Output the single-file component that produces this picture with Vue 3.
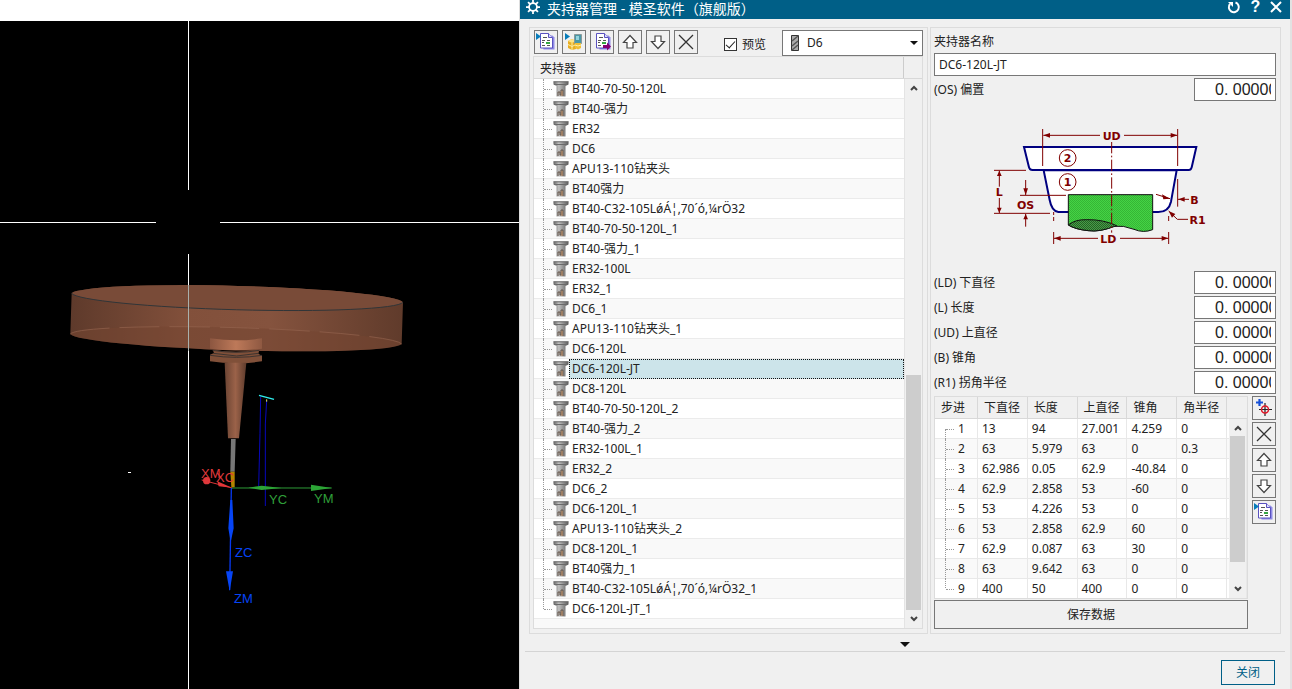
<script setup>
import { ref } from 'vue'

const holders = [
  'BT40-70-50-120L', 'BT40-强力', 'ER32', 'DC6', 'APU13-110钻夹头', 'BT40强力',
  'BT40-C32-105LǿÁ¦‚70´ó‚¼rÖ32', 'BT40-70-50-120L_1', 'BT40-强力_1',
  'ER32-100L', 'ER32_1', 'DC6_1', 'APU13-110钻夹头_1', 'DC6-120L', 'DC6-120L-JT',
  'DC8-120L', 'BT40-70-50-120L_2', 'BT40-强力_2', 'ER32-100L_1', 'ER32_2', 'DC6_2',
  'DC6-120L_1', 'APU13-110钻夹头_2', 'DC8-120L_1', 'BT40强力_1',
  'BT40-C32-105LǿÁ¦‚70´ó‚¼rÖ32_1', 'DC6-120L-JT_1',
]
const selected = ref('DC6-120L-JT')
const holderName = ref('DC6-120L-JT')
const preview = ref(true)
const tool = ref('D6')
const offset = ref('0. 00000')

const fields = ref([
  { id: 'ld', label: '(LD) 下直径', value: '0. 00000' },
  { id: 'len', label: '(L) 长度', value: '0. 00000' },
  { id: 'ud', label: '(UD) 上直径', value: '0. 00000' },
  { id: 'taper', label: '(B) 锥角', value: '0. 00000' },
  { id: 'r1', label: '(R1) 拐角半径', value: '0. 00000' },
])

const columns = ['步进', '下直径', '长度', '上直径', '锥角', '角半径']
const steps = [
  ['1', '13', '94', '27.001', '4.259', '0'],
  ['2', '63', '5.979', '63', '0', '0.3'],
  ['3', '62.986', '0.05', '62.9', '-40.84', '0'],
  ['4', '62.9', '2.858', '53', '-60', '0'],
  ['5', '53', '4.226', '53', '0', '0'],
  ['6', '53', '2.858', '62.9', '60', '0'],
  ['7', '62.9', '0.087', '63', '30', '0'],
  ['8', '63', '9.642', '63', '0', '0'],
  ['9', '400', '50', '400', '0', '0'],
]
const listTools = [
  { icon: 'import', label: '导入' }, { icon: 'library', label: '库' }, { icon: 'export', label: '导出' },
  { icon: 'up', label: '上移' }, { icon: 'down', label: '下移' }, { icon: 'delete', label: '删除' },
]
const stepTools = [
  { icon: 'add', label: '添加' }, { icon: 'delete', label: '删除步进' }, { icon: 'up', label: '步进上移' },
  { icon: 'down', label: '步进下移' }, { icon: 'import', label: '导入步进' },
]
</script>

<template>
  <svg class="defs" aria-hidden="true">
    <defs>
      <linearGradient id="metal">
        <stop offset="0" stop-color="#666" /><stop offset=".35" stop-color="#c0c0c0" /><stop offset="1" stop-color="#5c5c5c" />
      </linearGradient>
      <linearGradient id="disc">
        <stop offset="0" stop-color="#5e3a2b" /><stop offset=".35" stop-color="#82503b" /><stop offset=".6" stop-color="#85533e" /><stop offset="1" stop-color="#603b2b" />
      </linearGradient>
      <linearGradient id="cone">
        <stop offset="0" stop-color="#6b4433" /><stop offset=".5" stop-color="#9b6249" /><stop offset="1" stop-color="#5e3b2c" />
      </linearGradient>
      <linearGradient id="ring">
        <stop offset="0" stop-color="#8c5640" /><stop offset=".5" stop-color="#bd7959" /><stop offset="1" stop-color="#8f5942" />
      </linearGradient>
      <pattern id="greenDots" width="6" height="6" patternUnits="userSpaceOnUse">
        <rect width="6" height="6" fill="#45d345" /><rect width="3" height="3" fill="#35b535" /><rect x="3" y="3" width="3" height="3" fill="#35b535" />
      </pattern>
      <pattern id="darkDots" width="6" height="6" patternUnits="userSpaceOnUse">
        <rect width="6" height="6" fill="#499b49" /><rect width="3" height="3" fill="#246324" /><rect x="3" y="3" width="3" height="3" fill="#246324" />
      </pattern>
      <symbol id="doc" viewBox="0 0 20 20">
        <path d="M6 3.500h10.500l2 2v12h-11z" fill="#8f8ae6" />
        <path d="M4.500 1.500h8l4 4v10.500h-12z" fill="#fff" stroke="#5a52c0" />
        <path d="M12.500 1.500v4h4" fill="#dcdcff" stroke="#5a52c0" />
        <path d="M7 5.500h4M6 8.500h3M11 8.500h3M6 10.500h2M6 13.500h3M11 13.500h3" stroke="#555" />
        <path d="M10 11h4" stroke="#35a843" stroke-width="2" />
      </symbol>
      <symbol id="i-import" viewBox="0 0 20 20"><use href="#doc" /><path d="M0 1l5 3.500L0 8z" fill="#087cba" /></symbol>
      <symbol id="i-export" viewBox="0 0 20 20"><use href="#doc" /><path d="M11 13h4v-2.500l4 4-4 4V16h-4z" fill="#850074" /></symbol>
      <symbol id="i-library" viewBox="0 0 20 20">
        <path d="M1 1l5 3.500L1 8z" fill="#087cba" />
        <path d="M4 9l4-2 4 2v8l-4 1-4-2z" fill="#e8ad22" /><path d="M4 9l4-2 4 2-4 2z" fill="#ffe485" />
        <path d="M4 12.500l4 2 4-2M8 11v7" fill="none" stroke="#fff0a5" />
        <path d="M10.500 2.500h7v9h-7z" fill="#4b98a8" stroke="#8a9a9a" /><path d="M12 4h3v4h-3z" fill="#94d4dd" />
        <path d="M11 11h6v5l-3 1.500-3-1.500z" fill="#f0be36" /><path d="M11 13l3 1 3-1" fill="none" stroke="#fff0a5" />
      </symbol>
      <symbol id="i-up" viewBox="0 0 20 20"><path d="M10 3.500l6.500 7h-3.500v5.500H7v-5.500H3.500z" fill="#fff" stroke="#444" stroke-width="1.200" /></symbol>
      <symbol id="i-down" viewBox="0 0 20 20"><path d="M10 16.500L3.500 9.500H7V4h6v5.500h3.500z" fill="#fff" stroke="#444" stroke-width="1.200" /></symbol>
      <symbol id="i-delete" viewBox="0 0 20 20"><path d="M3 3l14 14M17 3L3 17" stroke="#333" stroke-width="1.300" /></symbol>
      <symbol id="i-add" viewBox="0 0 20 20">
        <path d="M2 4.500h7M5.500 1v7" stroke="#1650d8" stroke-width="2.200" />
        <path d="M11 5v13M5 11.500h13" stroke="#222" stroke-width="1.200" /><circle cx="11" cy="11.500" r="3.500" fill="none" stroke="#e01828" stroke-width="1.500" />
      </symbol>
      <symbol id="holder" viewBox="0 0 16 16">
        <path d="M.5.500h15v3l-3 1.500v10.500h-9V5L.5 3.500z" fill="url(#metal)" />
        <path d="M.5.800h15M1 3.500h14" stroke="#6a6a6a" />
        <path d="M5 15v-4h2v3h1V9h2v6" fill="none" stroke="#66564a" /><path d="M9 10v5" stroke="#b98354" />
      </symbol>
    </defs>
  </svg>

  <main class="screen">
    <section class="viewport">
      <div class="strip"></div>
      <svg class="scene" viewBox="0 21 519 668">
        <g transform="translate(50 270) scale(.33333)">
          <path d="M65 70A498 38 1.550 0 1 1059 97L1055 222A498 36 1.730 0 1 61 192z" fill="url(#disc)" />
          <path d="M65 70A498 38 1.550 0 1 1059 97A498 38 1.550 0 1 65 70z" fill="#794b38" />
          <path d="M61 192A498 36 1.730 0 1 1055 222A498 36 1.730 0 1 61 192z" fill="#744632" fill-opacity=".55" />
          <path d="M65 70A498 38 1.550 0 0 1059 97" fill="none" stroke="#303538" stroke-width="3" />
          <path d="M61 192A498 36 1.730 0 1 1055 222" fill="none" stroke="#94634e" stroke-width="2" stroke-dasharray="120 30" />
          <path d="M480 205q80 12 156 0v31q-80 10-156 0z" fill="url(#ring)" />
          <path d="M488 239q70 12 140 0l-3 12 11 6v17q-80 12-156 0v-20l12-5z" fill="#805039" />
          <path d="M488 241q70 12 140 0M480 256q80 12 156 0M490 250l70 8 65-8" fill="none" stroke="#3d332f" stroke-width="3" />
          <path d="M524 278h65L567 505h-33z" fill="url(#cone)" />
          <path d="M632 380l-2 110-4 162M650 392l-4 70v246" fill="none" stroke="#0808bd" stroke-width="3" />
          <path d="M627 376l45 12" stroke="#30eeee" stroke-width="4" /><path d="M650 388v7" stroke="#eded60" stroke-width="3" />
        </g>
        <path d="M188.500 21v169M188.500 254v435M0 222.500h156M220 222.500h299" stroke="#fff" />
        <path d="M188.500 285v66" stroke="#a9b0ac" />
        <path d="M128 472.500h3" stroke="#fff" />
        <g transform="translate(180 380) scale(.33333)">
          <path d="M153 177h14l-3 98h-13z" fill="#777" /><path d="M151 275h13v47h-10z" fill="#b38400" />
          <path d="M65 300l92 24" stroke="#e13638" stroke-width="3" /><circle cx="80" cy="302" r="11" fill="#df383b" /><path d="M112 304l44 19-40-4z" fill="#e33639" />
          <path d="M155 324h300" stroke="#2d9b37" stroke-width="3" /><path d="M205 323l40-6 60 7-60 6zM393 314l63 10-63 9z" fill="#2ca536" />
          <path d="M154 324L149 630" stroke="#0738f0" stroke-width="4" /><path d="M151 360h6l4 85-9 42-7-42zM138 574h21l-10 60z" fill="#0644f5" />
        </g>
        <g class="axis">
          <text x="201" y="478" fill="#df383b">XM</text><text x="216" y="482" fill="#df383b">XC</text>
          <text x="269" y="504" fill="#2f9f39">YC</text><text x="314" y="503" fill="#2f9f39">YM</text>
          <text x="235" y="557" fill="#0644f5">ZC</text><text x="234" y="603" fill="#0644f5">ZM</text>
        </g>
      </svg>
    </section>

    <section class="dialog">
      <header class="titlebar">
        <svg class="gear" viewBox="0 0 16 16"><circle cx="8" cy="8" r="4.500" fill="none" stroke="#fff" stroke-width="2" /><path d="M8 0v4M8 12v4M0 8h4M12 8h4M2.300 2.300l2.800 2.800M10.900 10.900l2.800 2.800M13.700 2.300l-2.800 2.800M5.100 10.900l-2.800 2.800" stroke="#fff" stroke-width="2" /></svg>
        <h1>夹持器管理 - 模圣软件（旗舰版）</h1>
        <button class="title-btn" aria-label="重置"><svg viewBox="0 0 14 14"><path d="M8.500 2.500A5 5 0 1 1 3 4" fill="none" stroke="#fff" stroke-width="2" /><path d="M1 2h5v5z" fill="#fff" /></svg></button>
        <button class="title-btn help" aria-label="帮助">?</button>
        <button class="title-btn" aria-label="关闭窗口"><svg viewBox="0 0 14 14"><path d="M2 2l10 10M12 2L2 12" stroke="#fff" stroke-width="2" /></svg></button>
      </header>

      <div class="panels">
        <section class="group left">
          <div class="toolbar">
            <button v-for="t in listTools" :key="t.icon" class="tool" :aria-label="t.label"><svg><use :href="'#i-' + t.icon" /></svg></button>
            <label class="check"><input v-model="preview" type="checkbox"><span>预览</span></label>
            <div class="combo">
              <svg class="mill" viewBox="0 0 8 16"><path d="M.5.500h7v15h-7z" fill="#aaa" stroke="#333" /><path d="M1 6l6-5M1 11l6-5M1 15l6-5" stroke="#555" stroke-width="1.500" /></svg>
              <select v-model="tool" aria-label="刀具"><option>D6</option></select>
              <svg class="drop" viewBox="0 0 8 4"><path d="M0 0h8L4 4z" fill="#111" /></svg>
            </div>
          </div>
          <div class="tree">
            <div class="tree-head"><span>夹持器</span></div>
            <div class="tree-body">
              <ul>
                <li v-for="h in holders" :key="h" :class="{ selected: h === selected }" @click="selected = h">
                  <svg class="holder"><use href="#holder" /></svg><span>{{ h }}</span>
                </li>
              </ul>
              <div class="scroll">
                <svg viewBox="0 0 8 6"><path d="M1 5l3-3 3 3" /></svg><i class="thumb"></i><svg viewBox="0 0 8 6"><path d="M1 1l3 3 3-3" /></svg>
              </div>
            </div>
          </div>
        </section>

        <section class="group right">
          <label class="name-label" for="name">夹持器名称</label>
          <input id="name" v-model="holderName" class="name" type="text">
          <div class="field"><label for="os">(OS) 偏置</label><input id="os" v-model="offset" type="text"></div>
          <svg class="diagram" viewBox="-138 -27 1026 504">
            <path d="M132 111H649L636 168Q634 180 626 180H158Q148 180 146 168z" fill="#fff" stroke="#000080" stroke-width="6" />
            <path d="M191 181H590L573 275Q566 306 535 306H235Q215 303 209 270z" fill="#fff" stroke="#000080" stroke-width="6" />
            <path d="M265 254H518V359Q490 370 462 358 430 345 400 349 360 367 325 362 285 358 265 345z" fill="url(#greenDots)" stroke="#111" stroke-width="3" />
            <path d="M265 345Q285 328 320 329 370 328 410 347 360 367 325 362 285 358 265 345z" fill="url(#darkDots)" stroke="#111" stroke-width="3" />
            <g fill="none" stroke="#800000" stroke-width="3">
              <path d="M188 57V168M593 57V168M190 76H360M432 76H592M42 181H138M42 310H210M120 256H258M58 182V230M58 264V309M137 210V255M137 312V350M221 306V315M221 321V333M221 366V402M566 318V333M566 366V402M222 385H354M420 385H565M593 207V290M594 268H627M566 303L592 328H624M528 253L570 266" />
              <path d="M395 96V368" stroke-dasharray="34 7 5 7" />
              <circle cx="263" cy="144" r="25" /><circle cx="263" cy="216" r="25" />
            </g>
            <path d="M190 76l20-7v14zM592 76l-20-7v14zM58 182l-7 16h14zM58 309l-7-16h14zM137 255l-7-20h14zM137 312l-7 16h14zM222 385l20-7v14zM565 385l-20-7v14zM595 268l19-7v14zM570 266l-24-13 4 15zM566 303l10 20 10-11z" fill="#800000" />
            <g class="dim">
              <text x="395" y="89">UD</text><text x="385" y="398">LD</text><text x="58" y="257">L</text><text x="137" y="297">OS</text>
              <text x="643" y="281">B</text><text x="653" y="341">R1</text>
              <text x="263" y="156">2</text><text x="263" y="228">1</text>
            </g>
          </svg>
          <div v-for="f in fields" :key="f.id" class="field"><label :for="f.id">{{ f.label }}</label><input :id="f.id" v-model="f.value" type="text"></div>
          <div class="steps">
            <div class="steps-main">
              <div class="grid">
                <table>
                  <thead><tr><th v-for="c in columns" :key="c">{{ c }}</th><th class="filler"></th></tr></thead>
                  <tbody><tr v-for="s in steps" :key="s[0]"><td v-for="(v, i) in s" :key="i">{{ v }}</td><td class="filler"></td></tr></tbody>
                </table>
                <div class="scroll small">
                  <svg viewBox="0 0 8 6"><path d="M1 5l3-3 3 3" /></svg><i class="thumb"></i><svg viewBox="0 0 8 6"><path d="M1 1l3 3 3-3" /></svg>
                </div>
              </div>
              <button class="save">保存数据</button>
            </div>
            <div class="side">
              <button v-for="t in stepTools" :key="t.icon" class="tool" :aria-label="t.label"><svg><use :href="'#i-' + t.icon" /></svg></button>
            </div>
          </div>
        </section>
      </div>
      <button class="expand" aria-label="展开"><svg viewBox="0 0 10 5"><path d="M0 0h10L5 5z" fill="#111" /></svg></button>
      <footer><button class="close">关闭</button></footer>
    </section>
  </main>
</template>

<style>
body { margin: 0; background: #fff; }
</style>

<style scoped>
* { box-sizing: border-box; }
button, input, select { font: inherit; color: inherit; border-radius: 0; margin: 0; }
button { padding: 0; }
.defs { position: absolute; width: 0; height: 0; }
.screen { display: grid; grid-template-columns: 519fr 773fr; min-height: 100vh; font: 12px/20px "Noto Sans", "Noto Sans CJK SC", sans-serif; color: #222; }
.viewport { background: #000; }
.strip { height: 21px; background: #fff; }
.scene { display: block; width: 100%; }
.axis { font: 13px "Liberation Sans", sans-serif; }
.dialog { background: #f0f0f0; border-left: 1px solid #ddd; border-right: 2px solid #e2e2e2; display: flex; flex-direction: column; }
.titlebar { height: 19px; background: #005f87; color: #fff; display: flex; align-items: center; gap: 6px; padding: 0 6px; }
.titlebar h1 { font-size: 14px; font-weight: 400; line-height: 18px; margin: 0; flex: 1; padding: 0 0 2px 1px; }
.gear { width: 14px; height: 14px; margin-bottom: 5px; }
.title-btn { width: 15px; height: 14px; border: 0; background: none; color: #fff; margin-bottom: 5px; }
.title-btn svg { display: block; width: 14px; height: 14px; }
.help { font: bold 16px/14px "Liberation Sans", sans-serif; }
.panels { display: grid; grid-template-columns: 399fr 351fr; gap: 2px; padding: 8px 9px 0; }
.group { border: 1px solid #dcdcdc; min-width: 0; }
.left { padding: 2px 4px 4px 3px; }
.toolbar { display: flex; gap: 4px; height: 26px; padding-left: 1px; }
.tool { width: 24px; height: 24px; border: 1px solid #777; background: #f0f0f0; display: grid; place-items: center; flex: none; }
.tool svg { width: 20px; height: 20px; display: block; }
.check { display: flex; align-items: center; gap: 5px; padding: 3px 0 0 22px; white-space: nowrap; }
.check input { appearance: none; width: 13px; height: 13px; border: 1px solid #333; background: #fff; display: grid; place-items: center; }
.check input:checked::after { content: ""; width: 8px; height: 4px; border: solid #222; border-width: 0 0 1px 1px; transform: rotate(-48deg); margin-bottom: 3px; }
.combo { position: relative; width: 141px; margin-left: auto; }
.combo select { appearance: none; width: 100%; height: 26px; border: 1px solid #777; background: #fff; padding: 0 24px; }
.mill { position: absolute; left: 9px; top: 5px; width: 8px; height: 16px; }
.drop { position: absolute; right: 5px; top: 11px; width: 8px; height: 4px; pointer-events: none; }
.tree { border: 1px solid #dcdcdc; }
.tree-head { height: 22px; border-bottom: 1px solid #d8d8d8; padding-right: 18px; line-height: 23px; }
.tree-head span { display: block; height: 21px; padding-left: 6px; border-right: 1px solid #ccc; }
.tree-body { display: flex; height: 549px; background: #fff; }
ul { list-style: none; margin: 0; padding: 0 0 8px; flex: 1; min-width: 0; border-right: 1px solid #e4e4e4; background: linear-gradient(#fff, #fff 540px, #f9f9f9 540px); }
li { position: relative; height: 20px; padding-left: 19px; display: flex; align-items: center; border-bottom: 1px solid #ebebeb; white-space: nowrap; }
li:nth-child(even) { background: #f9f9f9; }
li::before, tbody td:first-child::before { content: ""; position: absolute; left: 9px; top: 0; bottom: -1px; border-left: 1px dotted #999; }
li:last-child::before { bottom: 9px; }
li::after { content: ""; position: absolute; left: 10px; top: 10px; width: 8px; border-top: 1px dotted #999; }
li span { flex: 1; height: 20px; line-height: 19px; padding-left: 3px; }
li.selected span { background: #cce4ea; outline: 1px dotted #111; outline-offset: -1px; }
.holder { width: 16px; height: 16px; flex: none; }
.scroll { width: 17px; background: #f0f0f0; display: flex; flex-direction: column; align-items: center; padding: 6px 0; flex: none; }
.scroll svg { width: 8px; height: 6px; }
.scroll path { fill: none; stroke: #444; stroke-width: 2; }
.thumb { width: 15px; background: #cdcdcd; margin: auto 0 6px; height: 235px; }
.right { padding: 3px 4px 4px 3px; }
.name-label { display: block; line-height: 22px; }
.name { display: block; width: 100%; height: 23px; border: 1px solid #777; background: #fff; padding: 0 4px; }
.field { display: flex; justify-content: space-between; height: 23px; margin-top: 2px; line-height: 23px; }
.field input { width: 82px; height: 23px; border: 1px solid #777; background: #fff; padding: 0 4px 0 20px; font: 16px "Liberation Sans", sans-serif; }
.diagram { display: block; width: 342px; max-width: 100%; height: 168px; margin: 0 auto; }
.dim { font: bold 33px "DejaVu Sans", sans-serif; fill: #800000; text-anchor: middle; }
.steps { display: flex; gap: 4px; margin-top: 2px; }
.steps-main { flex: 1; min-width: 0; }
.grid { position: relative; border: 1px solid #dcdcdc; height: 203px; background: #fff; overflow: hidden; }
table { width: 100%; table-layout: fixed; border-collapse: separate; border-spacing: 0; }
th { height: 22px; font-weight: 400; text-align: left; padding: 0 0 0 6px; background: #f0f0f0; border: solid #d8d8d8; border-width: 0 1px 1px 0; line-height: 21px; white-space: nowrap; }
th:first-child { width: 43px; }
th.filler { width: 20px; border-right: 0; }
td { position: relative; height: 20px; line-height: 19px; padding: 0 0 0 4px; border: solid #e8e8e8; border-width: 0 1px 1px 0; }
td:first-child { padding-left: 23px; }
tbody tr:nth-child(even) td { background: #f9f9f9; }
tbody td:first-child::before { left: 10px; }
tbody tr:first-child td:first-child::before { top: 10px; }
tbody tr:last-child td:first-child::before { bottom: 10px; }
tbody td:first-child::after { content: ""; position: absolute; left: 11px; top: 10px; width: 8px; border-top: 1px dotted #999; }
.small { position: absolute; right: 1px; top: 22px; bottom: 0; }
.small .thumb { height: 126px; margin: 5px 0 auto; }
.save { display: block; width: 100%; height: 29px; margin-top: 1px; border: 1px solid #777; background: #f0f0f0; }
.side { display: flex; flex-direction: column; gap: 2px; }
.expand { display: grid; place-items: center; align-self: center; width: 20px; height: 17px; border: 0; background: none; padding-top: 4px; }
.expand svg { width: 10px; height: 5px; }
footer { margin: 0 5px; border-top: 1px solid #d4d4d4; padding: 8px 10px 4px; display: flex; justify-content: flex-end; }
.close { width: 54px; height: 25px; border: 1px solid #005f87; background: #f0f0f0; color: #005f87; }
</style>
